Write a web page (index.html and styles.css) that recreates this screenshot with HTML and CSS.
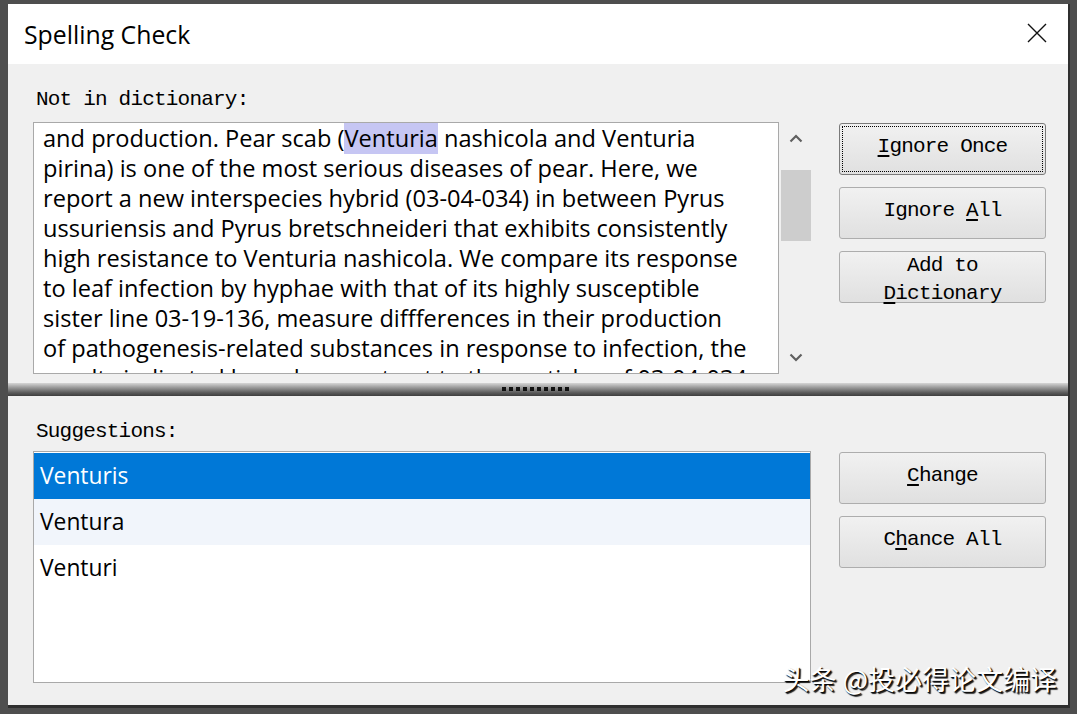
FILE: index.html
```html
<!DOCTYPE html>
<html lang="en">
<head>
    <meta charset="UTF-8">
    <meta name="viewport" content="width=device-width, initial-scale=1.0">
    <title>Spelling Check</title>
    <link rel="stylesheet" href="styles.css">
</head>
<body>

    <div class="dialog">
        <div class="titlebar">
            <span class="title">Spelling Check</span>
            <button class="close-btn" aria-label="Close">
                <svg width="20" height="20" viewBox="0 0 20 20"><path d="M1 1 L19 19 M19 1 L1 19" stroke="#111" stroke-width="1.4" fill="none"/></svg>
            </button>
        </div>

        <div class="pane pane-top">
            <div class="main">
                <div class="label">Not in dictionary:</div>
                <div class="editor">
                    <div class="text">and production. Pear scab (<span class="hit">Venturia</span> nashicola and Venturia<br>pirina) is one of the most serious diseases of pear. Here, we<br>report a new interspecies hybrid (03-04-034) in between Pyrus<br>ussuriensis and Pyrus bretschneideri that exhibits consistently<br>high resistance to Venturia nashicola. We compare its response<br>to leaf infection by hyphae with that of its highly susceptible<br>sister line 03-19-136, measure diffferences in their production<br>of pathogenesis-related substances in response to infection, the<br>results indicated by a clear contrast to the particles of 03-04-034</div>
                    <div class="scrollbar">
                        <div class="arrow">
                            <svg width="14" height="9" viewBox="0 0 14 9"><path d="M1.5 7.5 L7 2 L12.5 7.5" stroke="#606060" stroke-width="2.2" fill="none"/></svg>
                        </div>
                        <div class="thumb"></div>
                        <div class="arrow arrow-down">
                            <svg width="14" height="9" viewBox="0 0 14 9"><path d="M1.5 1.5 L7 7 L12.5 1.5" stroke="#606060" stroke-width="2.2" fill="none"/></svg>
                        </div>
                    </div>
                </div>
            </div>
            <div class="actions">
                <button class="btn btn-focus"><u>I</u>gnore Once</button>
                <button class="btn">Ignore <u>A</u>ll</button>
                <button class="btn btn-two">Add to<br><u>D</u>ictionary</button>
            </div>
        </div>

        <div class="splitter">
            <div class="grip">
                <i></i><i></i><i></i><i></i><i></i><i></i><i></i><i></i><i></i><i></i>
            </div>
        </div>

        <div class="pane pane-bottom">
            <div class="main">
                <div class="label">Suggestions:</div>
                <div class="list">
                    <div class="item selected">Venturis</div>
                    <div class="item alt">Ventura</div>
                    <div class="item">Venturi</div>
                </div>
            </div>
            <div class="actions">
                <button class="btn"><u>C</u>hange</button>
                <button class="btn">C<u>h</u>ance All</button>
            </div>
        </div>
    </div>

    <div class="watermark">头条 @投必得论文编译</div>

</body>
</html>
```

FILE: styles.css
```css
html, body {
    height: 100%;
    margin: 0;
}

body {
    position: relative;
    overflow: hidden;
    background-color: #4e4e4e;
    font-family: 'Open Sans', sans-serif;
}

.dialog {
    display: flex;
    flex-direction: column;
    width: 1060px;
    height: 701px;
    margin: 4px 0 0 8px;
    background-color: #f0f0f0;
    border-right: 2px solid #2f2f2f;
    border-bottom: 3px solid #2f2f2f;
}

.titlebar {
    display: flex;
    align-items: center;
    justify-content: space-between;
    height: 60px;
    padding: 0 21px 0 16px;
    background-color: #fff;
}

.title {
    font-size: 24.8px;
    color: #000;
}

.close-btn {
    display: flex;
    padding: 0;
    margin-top: -2px;
    background: none;
    border: none;
}

.pane {
    display: grid;
    grid-template-columns: 778px 207px;
    column-gap: 28px;
    padding-left: 25px;
}

.pane-top {
    padding-top: 24px;
    padding-bottom: 9px;
}

.pane-bottom {
    flex: 1;
    padding-top: 24px;
}

.label,
.btn {
    font-family: 'Liberation Mono', monospace;
    font-size: 21px;
    letter-spacing: -0.8px;
    color: #000;
}

.label {
    height: 24px;
    padding-left: 3px;
    line-height: 24px;
}

.pane-top .label {
    margin-bottom: 10px;
}

.pane-bottom .label {
    margin-bottom: 7px;
}

.editor {
    display: flex;
    height: 252px;
}

.text {
    width: 735px;
    padding-left: 9px;
    overflow: hidden;
    white-space: nowrap;
    background-color: #fff;
    border: 1px solid #a9a9a9;
    font-size: 23.6px;
    line-height: 30px;
    color: #000;
}

.hit {
    background-color: #c6c6f3;
}

.scrollbar {
    display: flex;
    flex-direction: column;
    flex: 1;
    padding-left: 2px;
}

.arrow {
    display: flex;
    align-items: center;
    justify-content: center;
    width: 30px;
    height: 32px;
}

.arrow-down {
    height: 34px;
    margin-top: auto;
}

.thumb {
    width: 30px;
    height: 71px;
    margin-top: 16px;
    background-color: #cdcdcd;
}

.actions {
    display: flex;
    flex-direction: column;
    gap: 12px;
}

.pane-top .actions {
    padding-top: 35px;
}

.pane-bottom .actions {
    padding-top: 32px;
}

.btn {
    height: 52px;
    padding: 0 0 4px;
    background: linear-gradient(#f1f1f1, #e0e0e0);
    border: 1px solid #adadad;
    border-radius: 3px;
    line-height: 24px;
}

.btn u {
    text-underline-offset: 3px;
}

.btn-focus {
    border-color: #7a7a7a;
    outline: 1px dotted #000;
    outline-offset: -4px;
}

.btn-two {
    padding-bottom: 8px;
    line-height: 28px;
}

.splitter {
    display: flex;
    justify-content: center;
    height: 13px;
    background: linear-gradient(#d6d6d6 0%, #9a9a9a 35%, #5a5a5a 75%, #3e3e3e 100%);
}

.grip {
    display: flex;
    gap: 3px;
    margin-top: 4px;
    margin-left: -6px;
}

.grip i {
    width: 4px;
    height: 4px;
    background-color: #111;
}

.list {
    height: 230px;
    background-color: #fff;
    border: 1px solid #a9a9a9;
}

.item {
    height: 46px;
    padding-left: 6px;
    font-size: 22.8px;
    line-height: 46px;
    color: #000;
}

.item.selected {
    margin-top: 1px;
    background-color: #0078d7;
    color: #fff;
}

.item.alt {
    background-color: #f1f5fb;
}

.watermark {
    position: absolute;
    right: 20px;
    bottom: 18px;
    font-family: 'Noto Sans CJK SC', sans-serif;
    font-size: 27px;
    line-height: 34px;
    color: #fff;
    text-shadow: 1px 1px 1px #000, 2px 2px 1px #222;
}
```
